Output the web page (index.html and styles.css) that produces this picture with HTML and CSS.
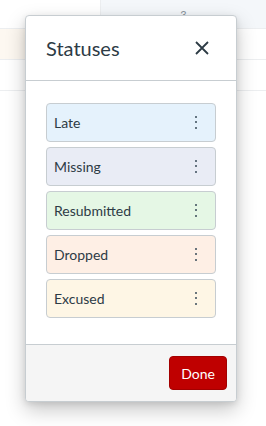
FILE: index.html
```html
<!DOCTYPE html>
<html lang="en">
<head>
  <meta charset="UTF-8" />
  <meta name="viewport" content="width=device-width, initial-scale=1.0"/>
  <title>Statuses</title>
  <link rel="stylesheet" href="styles.css">
</head>
<body>

<div class="grid">
  <div class="row first">
    <div class="cell"></div>
    <div class="cell head">3</div>
  </div>
  <div class="row">
    <div class="cell tint"></div>
    <div class="cell"></div>
  </div>
  <div class="row">
    <div class="cell"></div>
    <div class="cell"></div>
  </div>
</div>

<div class="dialog">
  <div class="dialog-header">
    <h2>Statuses</h2>
    <button class="close" aria-label="Close">
      <svg width="14" height="14" viewBox="0 0 14 14"><path d="M1 1 L13 13 M13 1 L1 13" stroke="#2d3b45" stroke-width="1.8" fill="none"/></svg>
    </button>
  </div>
  <ul class="statuses">
    <li class="status late"><span>Late</span><span class="kebab"><i></i><i></i><i></i></span></li>
    <li class="status missing"><span>Missing</span><span class="kebab"><i></i><i></i><i></i></span></li>
    <li class="status resubmitted"><span>Resubmitted</span><span class="kebab"><i></i><i></i><i></i></span></li>
    <li class="status dropped"><span>Dropped</span><span class="kebab"><i></i><i></i><i></i></span></li>
    <li class="status excused"><span>Excused</span><span class="kebab"><i></i><i></i><i></i></span></li>
  </ul>
  <div class="dialog-footer">
    <button class="done">Done</button>
  </div>
</div>

</body>
</html>
```

FILE: styles.css
```css
body { margin: 0; font-family: Lato, "Noto Sans", sans-serif; color: #2d3b45; background: #fff; width: 266px; height: 426px; overflow: hidden; position: relative; }

.grid { display: flex; flex-direction: column; }
.row { display: flex; height: 30px; border-bottom: 1px solid #eceef0; }
.row.first { height: 28px; }
.cell { flex: 0 0 100px; border-right: 1px solid #eceef0; }
.cell:last-child { flex: 1; border-right: none; }
.cell.head { background: #f4f7fa; font-size: 11px; color: #8b969e; text-align: center; line-height: 12px; padding-top: 9px; }
.cell.tint { background: #fdf8f1; }

.dialog {
  position: absolute; left: 25px; top: 15px; width: 210px; height: 385px;
  background: #fff; border: 1px solid #c7cdd1; border-radius: 4px;
  box-shadow: 0 8px 20px rgba(0,0,0,0.22), 0 2px 6px rgba(0,0,0,0.1);
  display: flex; flex-direction: column; overflow: hidden;
}
.dialog-header {
  height: 64px; border-bottom: 1px solid #c7cdd1;
  display: flex; align-items: center; justify-content: space-between;
  padding: 0 27px 0 20px;
}
.dialog-header h2 { margin: 0; font-size: 20px; font-weight: 400; }
.close { border: none; background: none; padding: 0; width: 14px; height: 14px; display: flex; }

.statuses { list-style: none; margin: 0; padding: 22px 20px 0; display: flex; flex-direction: column; gap: 5px; flex: 1; }
.status {
  box-sizing: border-box; height: 39px; border: 1px solid #c7cdd1; border-radius: 4px;
  display: flex; align-items: center; justify-content: space-between;
  padding: 0 18px 1px 7px; font-size: 14px;
}
.late { background: #e5f2fc; }
.missing { background: #e9ecf5; }
.resubmitted { background: #e5f7e5; }
.dropped { background: #feefe5; }
.excused { background: #fef6e5; }

.kebab { display: flex; flex-direction: column; gap: 3.5px; }
.kebab i { display: block; width: 2px; height: 2px; background: #394b58; border-radius: 50%; }

.dialog-footer {
  height: 56px; background: #f5f5f5; border-top: 1px solid #c7cdd1;
  display: flex; align-items: center; justify-content: flex-end; padding: 0 9px;
}
.done {
  width: 58px; height: 34px; background: #bf0000; color: #fff; border: 1px solid #a30000;
  border-radius: 4px; font-family: Lato, "Noto Sans", sans-serif; font-size: 14px; padding: 0;
}
```
